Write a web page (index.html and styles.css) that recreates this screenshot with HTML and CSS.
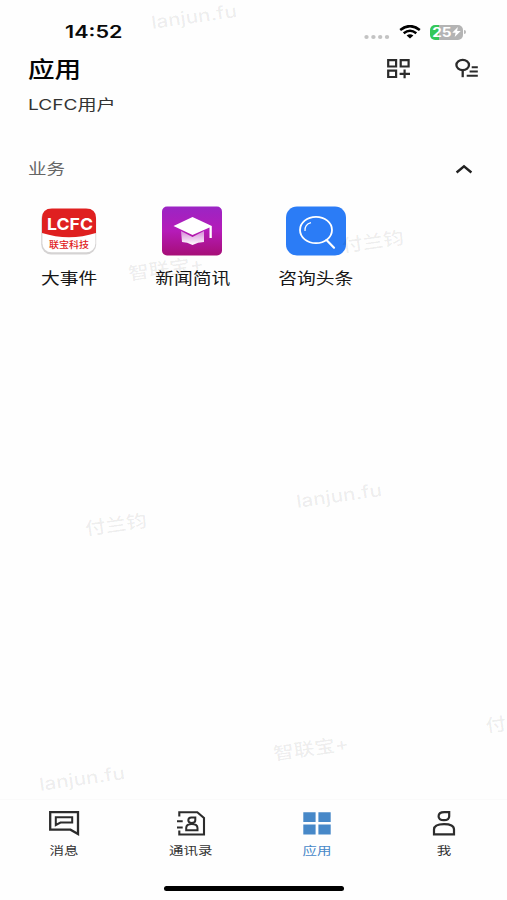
FILE: index.html
```html
<!DOCTYPE html>
<html lang="zh-CN">
<head>
<meta charset="utf-8">
<title>应用</title>
<link rel="stylesheet" href="styles.css">
</head>
<body>
<div class="screen">
  <div class="status">
    <span class="time wide">14:52</span>
    <svg class="signal" width="26" height="6" viewBox="0 0 26 6" fill="#c3c3c3"><ellipse cx="2.5" cy="3" rx="2.2" ry="2"/><ellipse cx="9.4" cy="3" rx="2.2" ry="2"/><ellipse cx="16.2" cy="3" rx="2.2" ry="2"/><ellipse cx="23" cy="3" rx="2.2" ry="2"/></svg>
    <svg class="wifi" width="22" height="14" viewBox="0 0 22 14" fill="none" stroke="#000" stroke-width="2.5"><path d="M1.2 5Q11-2.8 20.8 5"/><path d="M4.7 8.3Q11 3.2 17.3 8.3"/><path d="M7.6 10.6Q11 7.8 14.4 10.6L11 13.6Z" fill="#000" stroke="none"/></svg>
    <div class="battery"><span class="wide">25</span><svg width="9" height="10" viewBox="0 0 10 11" fill="#fff"><path d="M6.5 0 .3 6.2H4L3 11 9.7 4.5H5.7Z"/></svg></div>
    <i class="nub"></i>
  </div>

  <header class="header">
    <h1><span class="wide">应用</span></h1>
    <svg class="add" width="26" height="22" viewBox="0 0 26 22" fill="none" stroke="#2b2b2b" stroke-width="2.2"><path d="M2.2 2.1h7.9v6.4H2.2zM14.7 2.1h7.9v6.4h-7.9zM2.2 12.6h7.9V19H2.2zM18.6 11.4v8.8M13.6 15.8h10.4"/></svg>
    <svg class="manage" width="26" height="22" viewBox="0 0 26 22" fill="none" stroke="#2b2b2b" stroke-width="2"><ellipse cx="8.7" cy="7" rx="6.3" ry="5.2" stroke-width="2.3"/><path d="M8.7 12.4v6.8" stroke-width="2.3"/><path d="M17.7 9.3h6.1M15.6 13.6h8.2M12.7 17.8h11.1"/></svg>
  </header>
  <p class="subtitle"><span class="wide">LCFC用户</span></p>

  <section>
    <div class="section-head">
      <h2><span class="wide">业务</span></h2>
      <svg width="18" height="10" viewBox="0 0 18 10" fill="none" stroke="#222" stroke-width="2.4"><path d="M1.6 8.5 9 2.3l7.4 6.2"/></svg>
    </div>
    <div class="apps">
      <div class="app">
        <div class="icon"><svg width="60" height="50" viewBox="0 0 60 50">
          <rect x="2.2" y="3.5" width="55" height="45" rx="10" fill="#d5d3d3"/>
          <rect x="3.4" y="3" width="53" height="43.3" rx="9" fill="#fff"/>
          <path d="M3 27V12Q3 2.4 13 2.4H47Q57 2.4 57 12V27Q30 35.5 3 27Z" fill="#df2020"/>
          <text class="logo-en" x="8" y="23.5" textLength="46" lengthAdjust="spacingAndGlyphs">LCFC</text>
          <text class="logo-zh" x="10" y="41.5" textLength="40" lengthAdjust="spacingAndGlyphs">联宝科技</text>
        </svg></div>
        <span class="wide">大事件</span>
      </div>
      <div class="app">
        <div class="icon"><svg width="60" height="50" viewBox="0 0 60 50">
          <defs>
            <linearGradient id="purple" x1="0" y1="0" x2="0" y2="1"><stop offset="0" stop-color="#9b25c4"/><stop offset=".5" stop-color="#b51bb8"/><stop offset="1" stop-color="#a60e77"/></linearGradient>
            <linearGradient id="cap" x1="0" y1="0" x2="0" y2="1"><stop offset="0" stop-color="#d68bd8"/><stop offset="1" stop-color="#fff"/></linearGradient>
          </defs>
          <rect y=".5" width="60" height="49" rx="5" fill="url(#purple)"/>
          <path d="M19 25 30.5 31 42 25V36Q36 36 30.5 39 25 36 20 36Z" fill="url(#cap)"/>
          <path d="M11.5 20 30.5 11 49.8 20V32H47.5V21.5L30.5 29Z" fill="#fff"/>
        </svg></div>
        <span class="wide">新闻简讯</span>
      </div>
      <div class="app">
        <div class="icon"><svg width="60" height="50" viewBox="0 0 60 50" fill="none" stroke="#fff">
          <rect y=".5" width="60" height="49" rx="11" fill="#2b7cf6" stroke="none"/>
          <ellipse cx="30" cy="24" rx="16" ry="13.2" stroke-width="1.8"/>
          <path d="M40.5 34 48 41.7" stroke-width="2.2" stroke-linecap="round"/>
          <path d="M19 25Q18.5 18.5 25 16.7" stroke-width="1.2"/>
        </svg></div>
        <span class="wide">咨询头条</span>
      </div>
    </div>
  </section>

  <nav class="tabs">
    <div class="tab">
      <svg width="32" height="28" viewBox="0 0 32 28" fill="none" stroke="#2c2c2c" stroke-width="2.3"><path d="M2.2 3.2H30V25L22.5 20.7H2.2Z"/><path d="M7.8 8.2h16.4v5.3H12.5L7.8 16Z" stroke-width="2"/></svg>
      <span class="wide">消息</span>
    </div>
    <div class="tab">
      <svg width="32" height="28" viewBox="0 0 32 28" fill="none" stroke="#2c2c2c" stroke-width="2.1"><path d="M4.3 7.5V3.2H22.3L29 9V25.5H4.3V21.5"/><path d="M2 12.3h5.7M2 18.5h5.7"/><path d="M20.3 8.5h-4q-3 0-3 2.8 0 2.7 3.5 2.7t3.5-2.7ZM11.2 21.2v-2.2q0-4 5.6-4t5.7 4v2.2Z" stroke-width="2"/></svg>
      <span class="wide">通讯录</span>
    </div>
    <div class="tab active">
      <svg width="32" height="28" viewBox="0 0 32 28" fill="#4788c8"><path d="M2.3 3.2h12.3v9.9H2.3zM17.4 3.2h12.3v9.9H17.4zM2.3 15.6h12.3v9.8H2.3zM17.4 15.6h12.3v9.8H17.4z"/></svg>
      <span class="wide">应用</span>
    </div>
    <div class="tab">
      <svg width="32" height="28" viewBox="0 0 32 28" fill="none" stroke="#2c2c2c" stroke-width="2.2"><path d="M21.2 3.1H16.3Q10.6 3.1 10.6 7.2 10.6 11.2 15.9 11.2 21.2 11.2 21.2 7.2ZM6 25.3V20.5Q6 15.1 16 15.1T26 20.5V25.3Z"/></svg>
      <span class="wide">我</span>
    </div>
  </nav>
  <div class="home"></div>

  <div class="mark m1">lanjun.fu</div>
  <div class="mark m2">智联宝+</div>
  <div class="mark m3">付兰钧</div>
  <div class="mark m4">lanjun.fu</div>
  <div class="mark m5">付兰钧</div>
  <div class="mark m6">智联宝+</div>
  <div class="mark m7">付</div>
  <div class="mark m8">lanjun.fu</div>
</div>
</body>
</html>
```
FILE: styles.css
```css
* { box-sizing: border-box; margin: 0; padding: 0; }
body { background: #fefefe; font-family: Inter, "Noto Sans CJK SC", sans-serif; color: #161616; }
svg { display: block; flex: none; }
.screen { position: relative; width: 507px; height: 900px; overflow: hidden; display: flex; flex-direction: column; }

/* Wide lettering used throughout the interface */
.wide { display: inline-block; transform: scaleX(1.22); white-space: nowrap; }

.status { height: 52px; padding: 12px 41px 0 65px; display: flex; align-items: center; }
.time { font-size: 17px; font-weight: 600; transform: scaleX(1.27); transform-origin: left; color: #0a0a0a; }
.signal { margin: 9px 9px 0 auto; }
.battery { width: 33px; height: 15px; margin-left: 9px; padding-left: 2px; border-radius: 5px; background: linear-gradient(90deg, #35c759 26%, #b4b4b4 26%); display: flex; align-items: center; justify-content: center; gap: 2px; color: #fff; font-size: 12.5px; font-weight: 700; line-height: 15px; }
.nub { width: 2px; height: 4px; margin-left: 1px; background: #b9b9b9; border-radius: 0 2px 2px 0; }

.header { height: 34px; padding: 0 27px 0 28px; display: flex; align-items: center; }
h1 { flex: 1; font-size: 21.8px; font-weight: 500; line-height: 34px; color: #050505; }
h1 .wide, h2 .wide, .subtitle .wide { transform-origin: left; }
.manage { margin-left: 42px; }
.subtitle { height: 38px; padding-left: 28px; font-size: 14.8px; line-height: 39px; color: #333; }
.subtitle .wide { transform: scaleX(1.29); }

.section-head { height: 48px; margin-top: 21px; padding: 0 34px 0 28px; display: flex; align-items: center; justify-content: space-between; }
h2 { margin-top: -4px; font-size: 15.2px; font-weight: 400; color: #666; }
.apps { display: grid; grid-template-columns: repeat(3, 123.6px); padding: 13px 0 0 7px; }
.app { display: flex; flex-direction: column; align-items: center; font-size: 15.4px; line-height: 24px; }
.icon { margin-bottom: 11px; }
.logo-en { font: 700 16.5px Inter, sans-serif; fill: #fff; }
.logo-zh { font: 500 9px "Noto Sans CJK SC", sans-serif; fill: #df2020; }

.tabs { margin-top: auto; height: 87px; padding-top: 9px; display: grid; grid-template-columns: repeat(4, 1fr); border-top: 1px solid #fafafa; }
.tab { display: flex; flex-direction: column; align-items: center; padding-left: 1px; font-size: 11.9px; line-height: 18px; color: #333; gap: 5px; }
.active { color: #4788c8; }
.home { width: 180px; height: 5px; margin: 0 0 9px 164px; border-radius: 3px; background: #000; }

/* Watermark laid over the page */
.mark { position: absolute; color: rgba(0, 0, 0, .075); font-size: 18px; font-weight: 500; line-height: 24px; white-space: nowrap; pointer-events: none; transform: translate(-50%, -50%) rotate(-8deg) scaleX(1.15); }
.m1 { left: 194px; top: 17px; }
.m2 { left: 166px; top: 269px; }
.m3 { left: 373px; top: 242px; }
.m4 { left: 339px; top: 496px; }
.m5 { left: 116px; top: 525px; }
.m6 { left: 311px; top: 749px; }
.m7 { left: 496px; top: 725px; }
.m8 { left: 82px; top: 779px; }
```
